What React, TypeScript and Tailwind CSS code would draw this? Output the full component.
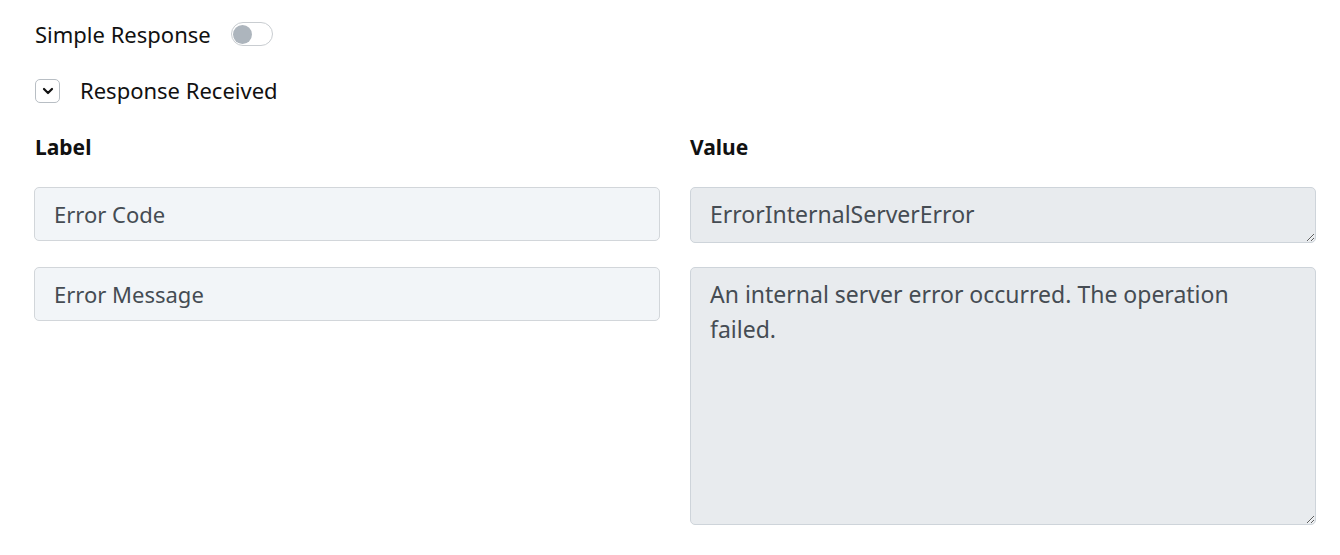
import React from 'react';

const fieldRows = [
  { label: 'Error Code', value: 'ErrorInternalServerError', height: 'h-[56px]' },
  { label: 'Error Message', value: 'An internal server error occurred. The operation failed.', height: 'h-[258px]' },
];

export default function App() {
  return (
    <div className="min-h-screen bg-white pl-[34px] pr-[24px] pt-[20px] font-['Noto_Sans',sans-serif] text-[#111]">
      <div className="flex items-center h-[28px] pl-px">
        <span className="text-[22px] leading-none">Simple Response</span>
        <button className="ml-[20px] w-[42px] h-[24px] rounded-full border border-[#c9cdd1] bg-white flex items-center px-[1px]">
          <span className="w-[19px] h-[19px] rounded-full bg-[#adb5bd]" />
        </button>
      </div>

      <div className="flex items-center mt-[31px] h-[24px] pl-px">
        <button className="w-[25px] h-[24px] rounded-[5px] border border-[#b8bec4] bg-white flex items-center justify-center">
          <svg width="14" height="14" viewBox="0 0 14 14" fill="none">
            <path d="M3 5L7 9L11 5" stroke="#111" strokeWidth="2.2" strokeLinecap="round" strokeLinejoin="round" />
          </svg>
        </button>
        <span className="ml-[20px] text-[22px] leading-none -mt-[3px]">Response Received</span>
      </div>

      <div className="grid grid-cols-2 gap-x-[30px] mt-[33px] h-[22px] items-center">
        <div className="text-[21px] font-bold leading-none pl-px">Label</div>
        <div className="text-[21px] font-bold leading-none">Value</div>
      </div>

      <div className="mt-[29px] flex flex-col gap-y-[24px]">
        {fieldRows.map(row => (
          <div key={row.label} className="grid grid-cols-2 gap-x-[30px] items-start">
            <input
              readOnly
              defaultValue={row.label}
              className="w-full h-[54px] rounded-[5px] border border-[#d2d6da] bg-[#f2f5f8] px-[19px] text-[22px] text-[#454c53] outline-none"
            />
            <textarea
              readOnly
              defaultValue={row.value}
              className={`block w-full ${row.height} rounded-[5px] border border-[#ced4da] bg-[#e8ebee] px-[19px] pt-[9px] text-[23px] leading-[35px] text-[#454c53] outline-none`}
            />
          </div>
        ))}
      </div>
    </div>
  );
}
